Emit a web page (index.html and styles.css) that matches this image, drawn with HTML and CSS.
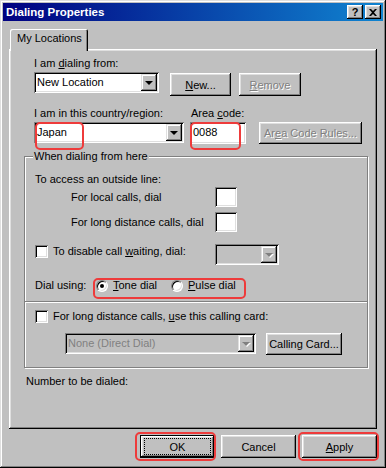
FILE: index.html
```html
<!DOCTYPE html>
<html lang="en">
<head>
    <meta charset="UTF-8">
    <title>Dialing Properties</title>
    <link rel="stylesheet" href="styles.css">
</head>
<body>
    <div class="window">
        <div class="titlebar">
            <span class="title">Dialing Properties</span>
            <div class="caption">
                <div class="cap-btn help">?</div>
                <div class="cap-btn">
                    <svg width="8" height="7" viewBox="0 0 8 7"><path d="M0 0h2l2 2 2-2h2L5 3.5 8 7H6L4 5 2 7H0l3-3.5z" fill="#000"/></svg>
                </div>
            </div>
        </div>

        <div class="tabs">
            <div class="tab">My Locations</div>
        </div>

        <div class="panel">
            <div class="top">
                <div class="label">I am <u>d</u>ialing from:</div>
                <div class="row row-from">
                    <div class="combo w-from">
                        <span class="combo-text">New Location</span>
                        <span class="combo-btn"><i class="arrow"></i></span>
                    </div>
                    <div class="btn btn-new"><u>N</u>ew...</div>
                    <div class="btn btn-remove disabled"><u>R</u>emove</div>
                </div>

                <div class="row row-labels">
                    <div class="label col-a">I am in this country/region:</div>
                    <div class="label">Area <u>c</u>ode:</div>
                </div>
                <div class="row row-country">
                    <div class="combo w-country">
                        <span class="combo-text">Japan</span>
                        <span class="combo-btn"><i class="arrow"></i></span>
                    </div>
                    <div class="field area">0088</div>
                    <div class="btn btn-rules disabled">Ar<u>e</u>a Code Rules...</div>
                </div>
            </div>

            <div class="group">
                <span class="group-label">When dialing from here</span>
                <div class="label">To access an outside line:</div>
                <div class="row dial-row first">
                    <span class="label dial-label">For local calls, dial</span>
                    <div class="field small"></div>
                </div>
                <div class="row dial-row second">
                    <span class="label dial-label">For long distance calls, dial</span>
                    <div class="field small"></div>
                </div>
                <div class="row wait-row">
                    <div class="check-item wait-check">
                        <span class="checkbox"></span>
                        <span class="label">To disable call <u>w</u>aiting, dial:</span>
                    </div>
                    <div class="combo disabled w-wait">
                        <span class="combo-text"></span>
                        <span class="combo-btn"><i class="arrow"></i></span>
                    </div>
                </div>
                <div class="row using-row">
                    <span class="label using-label">Dial using:</span>
                    <div class="radio-item tone">
                        <span class="radio checked"></span>
                        <span class="label"><u>T</u>one dial</span>
                    </div>
                    <div class="radio-item">
                        <span class="radio"></span>
                        <span class="label"><u>P</u>ulse dial</span>
                    </div>
                </div>
                <div class="sep"></div>
                <div class="check-item card-check">
                    <span class="checkbox"></span>
                    <span class="label">For long distance calls, <u>u</u>se this calling card:</span>
                </div>
                <div class="row card-row">
                    <div class="combo disabled w-card">
                        <span class="combo-text">None (Direct Dial)</span>
                        <span class="combo-btn"><i class="arrow"></i></span>
                    </div>
                    <div class="btn btn-card">Calling Card...</div>
                </div>
            </div>

            <div class="label number">Number to be dialed:</div>
        </div>

        <div class="actions">
            <div class="btn dlg default"><span class="focus">OK</span></div>
            <div class="btn dlg">Cancel</div>
            <div class="btn dlg"><u>A</u>pply</div>
        </div>

        <!-- red highlight marks -->
        <div class="mark mark-country"></div>
        <div class="mark mark-area"></div>
        <div class="mark mark-using"></div>
        <div class="mark mark-ok"></div>
        <div class="mark mark-apply"></div>
    </div>
</body>
</html>
```

FILE: styles.css
```css
body {
    margin: 0;
    background-color: #c0c0c0;
    font-family: "Liberation Sans", Arial, sans-serif;
    font-size: 11px;
    color: #000;
}

u {
    text-decoration: underline;
    text-underline-offset: 1px;
}

.window {
    position: relative;
    width: 386px;
    height: 468px;
    box-sizing: border-box;
    padding: 3px;
    background-color: #c0c0c0;
    box-shadow: inset -1px -1px #000, inset 1px 1px #dfdfdf,
                inset -2px -2px #808080, inset 2px 2px #fff;
}

.titlebar {
    display: flex;
    align-items: center;
    justify-content: space-between;
    height: 18px;
    padding: 0 2px 0 3px;
    background: linear-gradient(to right, #000080, #1084d0);
    color: #fff;
    font-weight: bold;
    font-size: 11.5px;
}

.caption {
    display: flex;
    gap: 2px;
}

.cap-btn {
    width: 16px;
    height: 14px;
    display: flex;
    align-items: center;
    justify-content: center;
    background-color: #c0c0c0;
    color: #000;
    box-shadow: inset -1px -1px #000, inset 1px 1px #fff,
                inset -2px -2px #808080, inset 2px 2px #dfdfdf;
}

.cap-btn.help {
    font-size: 11px;
    font-weight: bold;
    line-height: 14px;
}

/* tabs */
.tabs {
    display: flex;
    margin: 8px 0 -2px 7px;
    position: relative;
    z-index: 1;
}

.tab {
    width: 78px;
    height: 22px;
    box-sizing: border-box;
    padding: 3px 0 0 7px;
    line-height: 13px;
    background-color: #c0c0c0;
    border-radius: 2px 2px 0 0;
    box-shadow: inset 1px 1px #fff, inset -1px 0 #000, inset -2px 0 #808080;
}

.panel {
    height: 380px;
    box-sizing: border-box;
    margin: 0 6px;
    padding: 8px 0 0 15px;
    box-shadow: inset -1px -1px #000, inset 1px 1px #fff,
                inset -2px -2px #808080, inset 2px 2px #dfdfdf;
}

.label {
    line-height: 13px;
    white-space: nowrap;
}

.row {
    display: flex;
    align-items: flex-start;
}

.top {
    padding-left: 10px;
}

.row-from {
    margin-top: 2px;
}

.row-labels {
    margin-top: 11px;
}

.col-a {
    width: 157px;
}

.row-country {
    margin-top: 2px;
}

/* fields */
.field {
    background-color: #fff;
    box-sizing: border-box;
    box-shadow: inset 1px 1px #808080, inset -1px -1px #fff,
                inset 2px 2px #000, inset -2px -2px #dfdfdf;
}

.area {
    width: 56px;
    height: 22px;
    margin-left: 6px;
    padding: 2px 0 0 3px;
    line-height: 17px;
}

.small {
    width: 22px;
    height: 20px;
}

.combo {
    display: flex;
    height: 21px;
    box-sizing: border-box;
    padding: 2px;
    background-color: #fff;
    box-shadow: inset 1px 1px #808080, inset -1px -1px #fff,
                inset 2px 2px #000, inset -2px -2px #dfdfdf;
}

.combo.disabled {
    background-color: #c0c0c0;
}

.combo-text {
    flex: 1;
    padding-left: 1px;
    line-height: 17px;
    white-space: nowrap;
    overflow: hidden;
}

.combo.disabled .combo-text {
    color: #808080;
}

.combo-btn {
    width: 16px;
    height: 17px;
    display: flex;
    align-items: center;
    justify-content: center;
    background-color: #c0c0c0;
    box-shadow: inset -1px -1px #000, inset 1px 1px #dfdfdf,
                inset -2px -2px #808080, inset 2px 2px #fff;
}

.arrow {
    width: 0;
    height: 0;
    border-left: 4px solid transparent;
    border-right: 4px solid transparent;
    border-top: 4px solid #000;
}

.combo.disabled .arrow {
    border-top-color: #808080;
    filter: drop-shadow(1px 1px 0 #fff);
}

.w-from {
    width: 125px;
}

.w-country {
    width: 150px;
}

.w-wait {
    width: 64px;
}

.w-card {
    width: 191px;
}

/* buttons */
.btn {
    display: flex;
    align-items: center;
    justify-content: center;
    height: 23px;
    box-sizing: border-box;
    background-color: #c0c0c0;
    white-space: nowrap;
    box-shadow: inset -1px -1px #000, inset 1px 1px #fff,
                inset -2px -2px #808080, inset 2px 2px #dfdfdf;
}

.btn.disabled {
    color: #808080;
    text-shadow: 1px 1px 0 #fff;
}

.btn-new {
    width: 61px;
    margin: 1px 0 0 11px;
}

.btn-remove {
    width: 62px;
    margin: 1px 0 0 8px;
}

.btn-rules {
    width: 103px;
    height: 22px;
    margin-left: 13px;
}

.btn-card {
    width: 76px;
    height: 22px;
    margin-left: 10px;
}

/* group box */
.group {
    position: relative;
    margin-top: 12px;
    width: 344px;
    box-sizing: border-box;
    padding: 16px 0 12px 10px;
    border: 1px solid #808080;
    box-shadow: inset 1px 1px #fff, 1px 1px 0 #fff;
}

.group-label {
    position: absolute;
    top: -7px;
    left: 8px;
    padding: 0 1px;
    line-height: 13px;
    background-color: #c0c0c0;
}

.dial-row {
    align-items: center;
    padding-left: 36px;
}

.dial-row.first {
    margin-top: 1px;
}

.dial-row.second {
    margin-top: 5px;
}

.dial-label {
    width: 144px;
}

.wait-row {
    margin-top: 12px;
}

.wait-check {
    width: 180px;
    margin-top: 1px;
}

.check-item {
    display: flex;
    align-items: center;
    gap: 5px;
}

.checkbox {
    width: 13px;
    height: 13px;
    box-sizing: border-box;
    background-color: #fff;
    box-shadow: inset 1px 1px #808080, inset -1px -1px #fff,
                inset 2px 2px #000, inset -2px -2px #dfdfdf;
}

.using-row {
    margin-top: 14px;
    align-items: center;
}

.using-label {
    width: 61px;
}

.radio-item {
    display: flex;
    align-items: center;
    gap: 5px;
}

.radio-item.tone {
    width: 75px;
}

.radio {
    position: relative;
    width: 12px;
    height: 12px;
    box-sizing: border-box;
    border-radius: 50%;
    background-color: #fff;
    border: 1px solid;
    border-color: #808080 #fff #fff #808080;
    box-shadow: inset 1px 1px #000, inset -1px -1px #dfdfdf;
}

.radio.checked::after {
    content: "";
    position: absolute;
    left: 3px;
    top: 3px;
    width: 4px;
    height: 4px;
    border-radius: 50%;
    background-color: #000;
}

.sep {
    margin: 9px 0 0 -10px;
    border-top: 1px solid #808080;
    border-bottom: 1px solid #fff;
}

.card-check {
    margin-top: 7px;
}

.card-row {
    margin-top: 10px;
    padding-left: 30px;
}

.number {
    margin: 7px 0 0 2px;
}

/* bottom buttons */
.actions {
    display: flex;
    justify-content: flex-end;
    gap: 6px;
    margin: 6px 6px 0 0;
}

.btn.dlg {
    width: 75px;
}

.btn.default {
    box-shadow: inset 0 0 0 1px #000, inset -2px -2px #000, inset 2px 2px #fff,
                inset -3px -3px #808080, inset 3px 3px #dfdfdf;
}

.focus {
    display: flex;
    align-items: center;
    justify-content: center;
    width: 65px;
    height: 15px;
    outline: 1px dotted #000;
}

/* red highlight marks */
.mark {
    position: absolute;
    box-sizing: border-box;
    border: 2px solid #ee3b3b;
    border-radius: 5px;
}

.mark-country {
    left: 35px;
    top: 122px;
    width: 49px;
    height: 28px;
}

.mark-area {
    left: 190px;
    top: 122px;
    width: 51px;
    height: 28px;
}

.mark-using {
    left: 93px;
    top: 278px;
    width: 153px;
    height: 21px;
}

.mark-ok {
    left: 135px;
    top: 432px;
    width: 81px;
    height: 29px;
}

.mark-apply {
    left: 298px;
    top: 432px;
    width: 81px;
    height: 29px;
}
```
